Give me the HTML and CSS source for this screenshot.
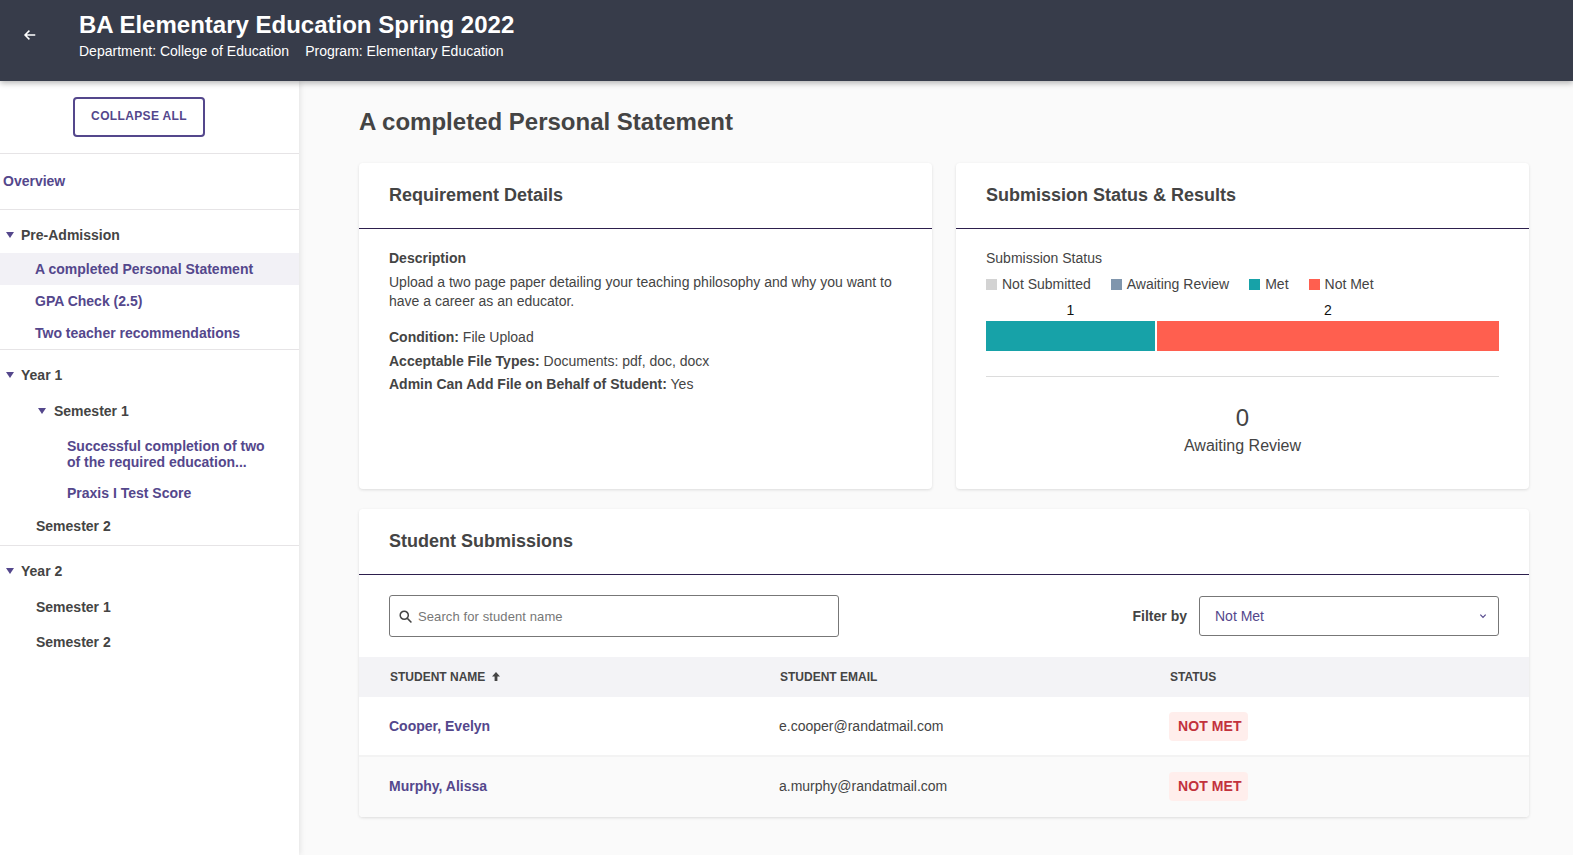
FILE: index.html
```html
<!DOCTYPE html>
<html lang="en-US">

<head>
    <meta charset="UTF-8">
    <meta name="viewport" content="width=device-width, initial-scale=1">
    <title>A completed Personal Statement</title>
    <link rel="stylesheet" href="styles.css">
</head>

<body>
    <header class="topbar">
        <a class="back-link" href="#">
            <svg width="14" height="14" viewBox="0 0 24 24" fill="none" stroke="#fff" stroke-width="2.6">
                <path d="M21 12H4M11 4.5L3.5 12l7.5 7.5" />
            </svg>
        </a>
        <div class="topbar-text">
            <h1>BA Elementary Education Spring 2022</h1>
            <p><span>Department: College of Education</span><span>Program: Elementary Education</span></p>
        </div>
    </header>

    <div class="layout">
        <nav class="sidebar">
            <div class="sidebar-top">
                <button class="collapse-btn">COLLAPSE ALL</button>
            </div>

            <div class="nav-section overview-section">
                <a class="nav-link overview" href="#">Overview</a>
            </div>

            <div class="nav-section pre-admission">
                <div class="nav-heading"><i class="caret"></i>Pre-Admission</div>
                <a class="nav-link item active" href="#">A completed Personal Statement</a>
                <a class="nav-link item" href="#">GPA Check (2.5)</a>
                <a class="nav-link item" href="#">Two teacher recommendations</a>
            </div>

            <div class="nav-section year">
                <div class="nav-heading"><i class="caret"></i>Year 1</div>
                <div class="nav-heading semester-open"><i class="caret"></i>Semester 1</div>
                <a class="nav-link req req-long" href="#">Successful completion of two of the required education...</a>
                <a class="nav-link req" href="#">Praxis I Test Score</a>
                <div class="nav-heading semester">Semester 2</div>
            </div>

            <div class="nav-section year last">
                <div class="nav-heading"><i class="caret"></i>Year 2</div>
                <div class="nav-heading semester">Semester 1</div>
                <div class="nav-heading semester">Semester 2</div>
            </div>
        </nav>

        <main class="content">
            <h2 class="page-title">A completed Personal Statement</h2>

            <div class="card-row">
                <section class="card">
                    <h3 class="card-title">Requirement Details</h3>
                    <div class="card-body">
                        <h4 class="desc-title">Description</h4>
                        <p class="desc">Upload a two page paper detailing your teaching philosophy and why you want to have a career as an educator.</p>
                        <p class="fact"><b>Condition:</b> File Upload</p>
                        <p class="fact"><b>Acceptable File Types:</b> Documents: pdf, doc, docx</p>
                        <p class="fact"><b>Admin Can Add File on Behalf of Student:</b> Yes</p>
                    </div>
                </section>

                <section class="card">
                    <h3 class="card-title">Submission Status &amp; Results</h3>
                    <div class="card-body">
                        <div class="chart-title">Submission Status</div>
                        <ul class="legend">
                            <li><i class="swatch grey"></i>Not Submitted</li>
                            <li><i class="swatch slate"></i>Awaiting Review</li>
                            <li><i class="swatch teal"></i>Met</li>
                            <li><i class="swatch coral"></i>Not Met</li>
                        </ul>
                        <div class="bar">
                            <div class="bar-part part-met">
                                <span>1</span>
                                <div class="bar-fill teal"></div>
                            </div>
                            <div class="bar-part part-not-met">
                                <span>2</span>
                                <div class="bar-fill coral"></div>
                            </div>
                        </div>
                        <div class="tally">
                            <div class="tally-num">0</div>
                            <div class="tally-label">Awaiting Review</div>
                        </div>
                    </div>
                </section>
            </div>

            <section class="card submissions">
                <h3 class="card-title">Student Submissions</h3>
                <div class="toolbar">
                    <div class="search">
                        <svg width="15" height="15" viewBox="0 0 24 24" fill="none" stroke="#444" stroke-width="2.4">
                            <circle cx="10" cy="10" r="6.5" />
                            <path d="M15 15l6.5 6.5" />
                        </svg>
                        <span>Search for student name</span>
                    </div>
                    <div class="filter">
                        <label>Filter by</label>
                        <div class="select">
                            <span>Not Met</span>
                            <svg width="8" height="8" viewBox="0 0 24 24" fill="none" stroke="#54478c" stroke-width="3.6">
                                <path d="M4 8l8 8 8-8" />
                            </svg>
                        </div>
                    </div>
                </div>

                <div class="table-row table-head">
                    <div>STUDENT NAME <svg class="sort" width="8" height="9" viewBox="0 0 8 9" fill="#444"><path d="M4 0l4 4.5H5.4V9H2.6V4.5H0z" /></svg></div>
                    <div>STUDENT EMAIL</div>
                    <div>STATUS</div>
                </div>
                <div class="table-row">
                    <a class="student" href="#">Cooper, Evelyn</a>
                    <div>e.cooper@randatmail.com</div>
                    <div><span class="badge">NOT MET</span></div>
                </div>
                <div class="table-row even">
                    <a class="student" href="#">Murphy, Alissa</a>
                    <div>a.murphy@randatmail.com</div>
                    <div><span class="badge">NOT MET</span></div>
                </div>
            </section>
        </main>
    </div>
</body>

</html>
```

FILE: styles.css
```css
body,
html {
    height: 100%;
    margin: 0;
}

body {
    display: flex;
    flex-direction: column;
    overflow: hidden;
    background: #fafafa;
    color: #444;
    font-family: "Liberation Sans", Arial, sans-serif;
    font-size: 14px;
}

a {
    text-decoration: none;
}

h1,
h2,
h3,
h4,
p,
ul {
    margin: 0;
    padding: 0;
}

.topbar {
    position: relative;
    z-index: 2;
    flex: 0 0 81px;
    display: flex;
    background: #373c4a;
    color: #fff;
    box-shadow: 0 2px 6px rgba(0, 0, 0, 0.3);
}

.back-link {
    display: flex;
    align-items: center;
    height: 70px;
    padding-left: 23px;
    width: 56px;
}

.topbar-text {
    padding-top: 11px;
}

.topbar-text h1 {
    font-size: 24px;
    line-height: 28px;
    font-weight: bold;
}

.topbar-text p {
    margin-top: 2px;
    line-height: 20px;
    display: flex;
    gap: 16px;
}

.layout {
    flex: 1;
    display: flex;
    min-height: 0;
}

.sidebar {
    flex: 0 0 299px;
    background: #fff;
    box-shadow: 1px 0 6px rgba(0, 0, 0, 0.1);
}

.sidebar-top {
    display: flex;
    padding: 16px 0 16px 73px;
    border-bottom: 1px solid #e6e4e6;
}

.collapse-btn {
    width: 132px;
    height: 40px;
    padding: 0 0 2px;
    background: #fff;
    border: 2px solid #54478c;
    border-radius: 4px;
    color: #54478c;
    font-family: inherit;
    font-size: 12px;
    font-weight: bold;
    letter-spacing: 0.35px;
}

.nav-section {
    border-bottom: 1px solid #e6e4e6;
    font-weight: bold;
}

.nav-section.last {
    border-bottom: 0;
}

.nav-link {
    display: block;
    color: #54478c;
}

.overview-section {
    padding: 18px 0 19px 3px;
    line-height: 18px;
}

.nav-heading {
    display: flex;
    align-items: center;
    height: 34px;
    padding-left: 6px;
    color: #444;
}

.nav-heading:first-child {
    margin-bottom: 1px;
}

.caret {
    width: 0;
    height: 0;
    margin-right: 7px;
    border-left: 4px solid transparent;
    border-right: 4px solid transparent;
    border-top: 6px solid #54478c;
}

.pre-admission {
    padding-top: 8px;
}

.item {
    height: 32px;
    padding-left: 35px;
    line-height: 32px;
}

.active {
    background: #f2f1f6;
}

.year {
    padding-top: 8px;
    padding-bottom: 2px;
}

.semester-open {
    height: 36px;
    padding-left: 38px;
}

.semester-open .caret {
    margin-right: 8px;
}

.semester {
    height: 35px;
    padding-left: 36px;
}

.req {
    padding: 7px 0 7px 67px;
    line-height: 16px;
}

.req-long {
    padding-top: 9px;
    padding-bottom: 8px;
    width: 210px;
}

.content {
    flex: 1;
    min-width: 0;
    padding: 0 44px 0 60px;
}

.page-title {
    padding: 27px 0;
    font-size: 24px;
    line-height: 28px;
    font-weight: bold;
}

.card-row {
    display: flex;
    gap: 24px;
}

.card {
    flex: 1;
    background: #fff;
    border-radius: 4px;
    box-shadow: 0 1px 3px rgba(0, 0, 0, 0.12);
}

.card-title {
    height: 65px;
    padding-left: 30px;
    border-bottom: 1px solid #2d1f4d;
    font-size: 18px;
    line-height: 65px;
    font-weight: bold;
}

.card-body {
    height: 240px;
    padding: 20px 30px 0;
}

.desc-title {
    font-size: 14px;
    line-height: 19px;
}

.desc {
    margin-top: 5px;
    margin-bottom: 15px;
    line-height: 19px;
}

.fact {
    line-height: 23.5px;
}

.chart-title {
    line-height: 19px;
}

.legend {
    display: flex;
    gap: 20px;
    margin-top: 7px;
    list-style: none;
    line-height: 19px;
}

.legend li {
    display: flex;
    align-items: center;
}

.swatch {
    width: 11px;
    height: 11px;
    margin-right: 5px;
}

.grey {
    background: #d3d3d3;
}

.slate {
    background: #8096ad;
}

.teal {
    background: #17a2a8;
}

.coral {
    background: #ff5f4f;
}

.bar {
    display: flex;
    gap: 2px;
    margin-top: 8px;
    padding-bottom: 25px;
    border-bottom: 1px solid #dcdcdc;
}

.bar-part {
    color: #111;
    text-align: center;
    font-size: 14px;
    line-height: 17px;
}

.part-met {
    flex: 169;
}

.part-not-met {
    flex: 342;
}

.bar-fill {
    height: 30px;
    margin-top: 2px;
}

.tally {
    margin-top: 26px;
    text-align: center;
}

.tally-num {
    font-size: 24px;
    line-height: 29px;
}

.tally-label {
    margin-top: 4px;
    font-size: 16px;
    line-height: 20px;
}

.submissions {
    margin-top: 20px;
}

.toolbar {
    display: flex;
    justify-content: space-between;
    align-items: center;
    padding: 20px 30px;
}

.search {
    display: flex;
    align-items: center;
    gap: 5px;
    width: 450px;
    height: 42px;
    box-sizing: border-box;
    padding-left: 8px;
    border: 1px solid #777;
    border-radius: 3px;
    color: #777;
    font-size: 13px;
    letter-spacing: 0.1px;
}

.filter {
    display: flex;
    align-items: center;
    gap: 12px;
}

.filter label {
    font-weight: bold;
}

.select {
    display: flex;
    justify-content: space-between;
    align-items: center;
    width: 300px;
    height: 40px;
    box-sizing: border-box;
    padding: 0 11px 0 15px;
    border: 1px solid #777;
    border-radius: 3px;
    color: #54478c;
}

.table-row {
    display: grid;
    grid-template-columns: 390px 390px 1fr;
    align-items: center;
    height: 58px;
    padding-left: 30px;
    border-bottom: 2px solid #f3f3f3;
}

.table-row.even {
    padding-bottom: 2px;
    background: #fafafa;
    border-bottom: 0;
    border-radius: 0 0 4px 4px;
}

.table-head {
    height: 40px;
    background: #f3f3f6;
    border-bottom: 0;
    font-size: 12px;
    font-weight: bold;
}

.table-head div {
    padding-left: 1px;
}

.sort {
    margin-left: 3px;
}

.student {
    color: #54478c;
    font-weight: bold;
}

.badge {
    display: inline-block;
    padding: 0 6px 0 9px;
    height: 29px;
    background: #ffeeec;
    border-radius: 4px;
    color: #c2323c;
    font-weight: bold;
    line-height: 29px;
    letter-spacing: 0.1px;
}
```
